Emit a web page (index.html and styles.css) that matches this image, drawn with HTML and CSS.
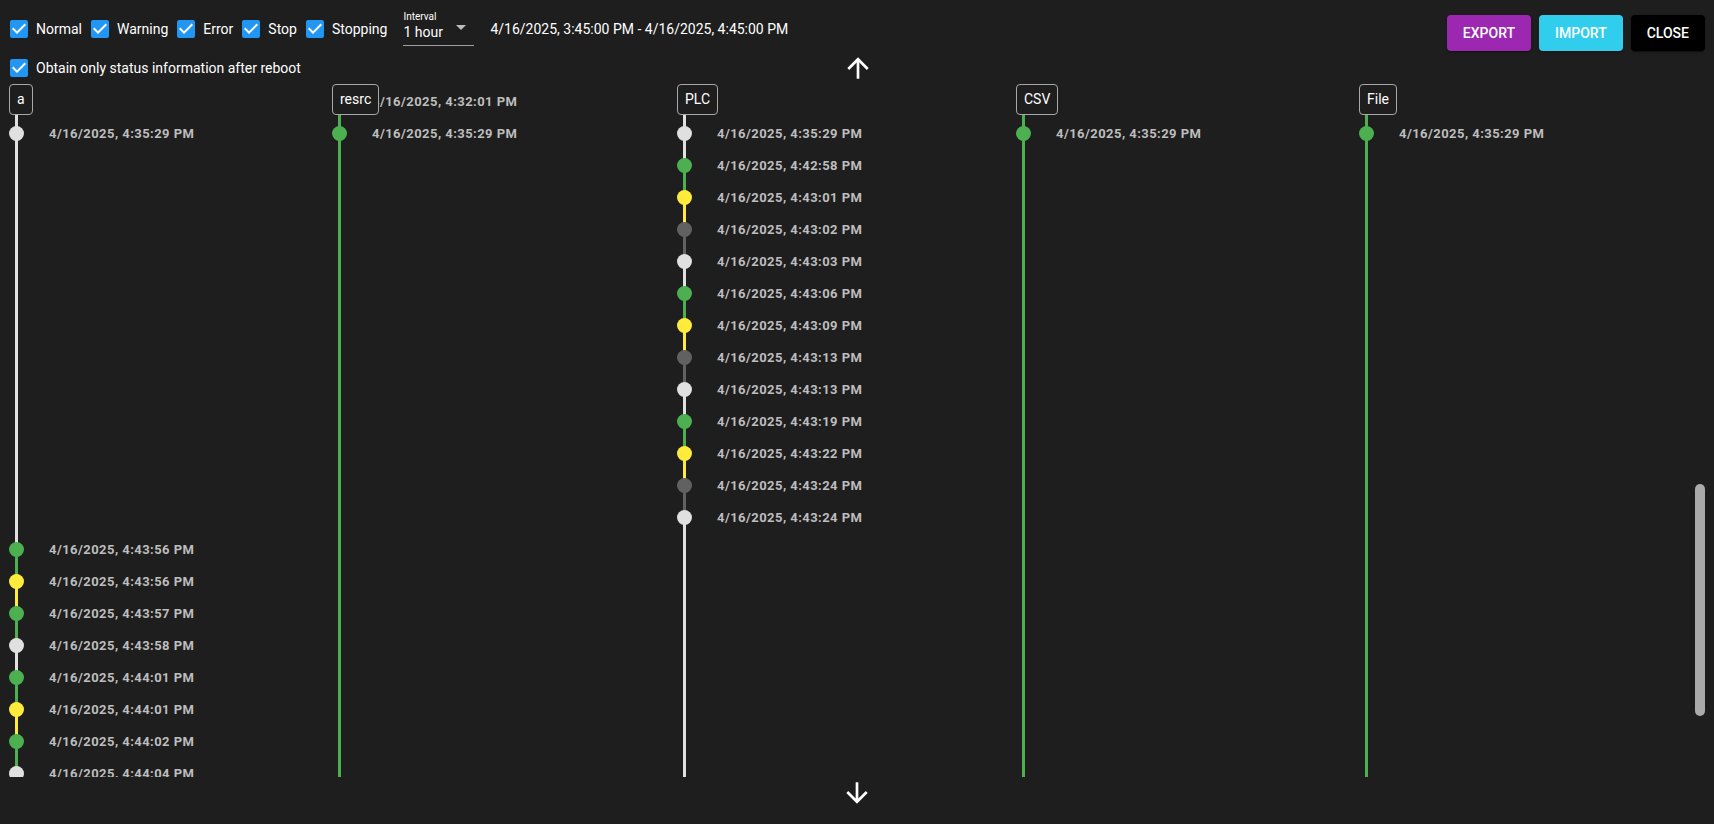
FILE: index.html
```html
<!DOCTYPE html>
<html lang="en">
<head>
<meta charset="utf-8">
<title>Status timeline</title>
<link rel="stylesheet" href="styles.css">
</head>
<body>
<div class="app">
  <header class="header">
    <div class="row1">
      <div class="filters">
        <label class="cb"><svg class="box" viewBox="3 3 18 18"><rect x="3" y="3" width="18" height="18" rx="2" class="box-bg"/><path class="box-check" d="M10 17l-5-5 1.41-1.41L10 14.17l7.59-7.59L19 8l-9 9z"/></svg><span>Normal</span></label>
        <label class="cb"><svg class="box" viewBox="3 3 18 18"><rect x="3" y="3" width="18" height="18" rx="2" class="box-bg"/><path class="box-check" d="M10 17l-5-5 1.41-1.41L10 14.17l7.59-7.59L19 8l-9 9z"/></svg><span>Warning</span></label>
        <label class="cb"><svg class="box" viewBox="3 3 18 18"><rect x="3" y="3" width="18" height="18" rx="2" class="box-bg"/><path class="box-check" d="M10 17l-5-5 1.41-1.41L10 14.17l7.59-7.59L19 8l-9 9z"/></svg><span>Error</span></label>
        <label class="cb"><svg class="box" viewBox="3 3 18 18"><rect x="3" y="3" width="18" height="18" rx="2" class="box-bg"/><path class="box-check" d="M10 17l-5-5 1.41-1.41L10 14.17l7.59-7.59L19 8l-9 9z"/></svg><span>Stop</span></label>
        <label class="cb"><svg class="box" viewBox="3 3 18 18"><rect x="3" y="3" width="18" height="18" rx="2" class="box-bg"/><path class="box-check" d="M10 17l-5-5 1.41-1.41L10 14.17l7.59-7.59L19 8l-9 9z"/></svg><span>Stopping</span></label>
        <div class="interval">
          <div class="interval-label">Interval</div>
          <div class="interval-value"><span>1 hour</span><span class="caret"></span></div>
        </div>
        <div class="range">4/16/2025, 3:45:00 PM - 4/16/2025, 4:45:00 PM</div>
      </div>
      <div class="actions">
        <button class="btn export">Export</button>
        <button class="btn import">Import</button>
        <button class="btn close">Close</button>
      </div>
    </div>
    <div class="row2">
      <label class="cb"><svg class="box" viewBox="3 3 18 18"><rect x="3" y="3" width="18" height="18" rx="2" class="box-bg"/><path class="box-check" d="M10 17l-5-5 1.41-1.41L10 14.17l7.59-7.59L19 8l-9 9z"/></svg><span>Obtain only status information after reboot</span></label>
      <svg class="arrow" viewBox="0 0 24 24"><path d="M4 12l1.41 1.41L11 7.83V20h2V7.83l5.58 5.59L20 12l-8-8-8 8z"/></svg>
      <span class="spacer"></span>
    </div>
  </header>

  <main class="timeline">
    <!-- column a -->
    <section class="col">
      <div class="tag">a</div>
      <div class="row tw bw"><div class="node"><i class="rail"></i></div></div>
      <div class="row tw bw"><div class="node"><i class="rail"></i><i class="dot w"></i></div><span class="time">4/16/2025, 4:35:29 PM</span></div>
      <div class="row tw bw"><div class="node"><i class="rail"></i></div></div>
      <div class="row tw bw"><div class="node"><i class="rail"></i></div></div>
      <div class="row tw bw"><div class="node"><i class="rail"></i></div></div>
      <div class="row tw bw"><div class="node"><i class="rail"></i></div></div>
      <div class="row tw bw"><div class="node"><i class="rail"></i></div></div>
      <div class="row tw bw"><div class="node"><i class="rail"></i></div></div>
      <div class="row tw bw"><div class="node"><i class="rail"></i></div></div>
      <div class="row tw bw"><div class="node"><i class="rail"></i></div></div>
      <div class="row tw bw"><div class="node"><i class="rail"></i></div></div>
      <div class="row tw bw"><div class="node"><i class="rail"></i></div></div>
      <div class="row tw bw"><div class="node"><i class="rail"></i></div></div>
      <div class="row tw bw"><div class="node"><i class="rail"></i></div></div>
      <div class="row tw bg"><div class="node"><i class="rail"></i><i class="dot g"></i></div><span class="time">4/16/2025, 4:43:56 PM</span></div>
      <div class="row tg by"><div class="node"><i class="rail"></i><i class="dot y"></i></div><span class="time">4/16/2025, 4:43:56 PM</span></div>
      <div class="row ty bg"><div class="node"><i class="rail"></i><i class="dot g"></i></div><span class="time">4/16/2025, 4:43:57 PM</span></div>
      <div class="row tg bw"><div class="node"><i class="rail"></i><i class="dot w"></i></div><span class="time">4/16/2025, 4:43:58 PM</span></div>
      <div class="row tw bg"><div class="node"><i class="rail"></i><i class="dot g"></i></div><span class="time">4/16/2025, 4:44:01 PM</span></div>
      <div class="row tg by"><div class="node"><i class="rail"></i><i class="dot y"></i></div><span class="time">4/16/2025, 4:44:01 PM</span></div>
      <div class="row ty bg"><div class="node"><i class="rail"></i><i class="dot g"></i></div><span class="time">4/16/2025, 4:44:02 PM</span></div>
      <div class="row tg bw"><div class="node"><i class="rail"></i><i class="dot w"></i></div><span class="time">4/16/2025, 4:44:04 PM</span></div>
      <div class="fill tw bw"><i class="rail"></i></div>
    </section>

    <!-- column resrc -->
    <section class="col">
      <div class="tag">resrc</div>
      <div class="row tg bg"><div class="node"><i class="rail"></i><i class="dot g"></i></div><span class="time">4/16/2025, 4:32:01 PM</span></div>
      <div class="row tg bg"><div class="node"><i class="rail"></i><i class="dot g"></i></div><span class="time">4/16/2025, 4:35:29 PM</span></div>
      <div class="fill tg bg"><i class="rail"></i></div>
    </section>

    <!-- column PLC -->
    <section class="col">
      <div class="tag">PLC</div>
      <div class="row tw bw"><div class="node"><i class="rail"></i></div></div>
      <div class="row tw bw"><div class="node"><i class="rail"></i><i class="dot w"></i></div><span class="time">4/16/2025, 4:35:29 PM</span></div>
      <div class="row tw bg"><div class="node"><i class="rail"></i><i class="dot g"></i></div><span class="time">4/16/2025, 4:42:58 PM</span></div>
      <div class="row tg by"><div class="node"><i class="rail"></i><i class="dot y"></i></div><span class="time">4/16/2025, 4:43:01 PM</span></div>
      <div class="row ty bs"><div class="node"><i class="rail"></i><i class="dot s"></i></div><span class="time">4/16/2025, 4:43:02 PM</span></div>
      <div class="row ts bw"><div class="node"><i class="rail"></i><i class="dot w"></i></div><span class="time">4/16/2025, 4:43:03 PM</span></div>
      <div class="row tw bg"><div class="node"><i class="rail"></i><i class="dot g"></i></div><span class="time">4/16/2025, 4:43:06 PM</span></div>
      <div class="row tg by"><div class="node"><i class="rail"></i><i class="dot y"></i></div><span class="time">4/16/2025, 4:43:09 PM</span></div>
      <div class="row ty bs"><div class="node"><i class="rail"></i><i class="dot s"></i></div><span class="time">4/16/2025, 4:43:13 PM</span></div>
      <div class="row ts bw"><div class="node"><i class="rail"></i><i class="dot w"></i></div><span class="time">4/16/2025, 4:43:13 PM</span></div>
      <div class="row tw bg"><div class="node"><i class="rail"></i><i class="dot g"></i></div><span class="time">4/16/2025, 4:43:19 PM</span></div>
      <div class="row tg by"><div class="node"><i class="rail"></i><i class="dot y"></i></div><span class="time">4/16/2025, 4:43:22 PM</span></div>
      <div class="row ty bs"><div class="node"><i class="rail"></i><i class="dot s"></i></div><span class="time">4/16/2025, 4:43:24 PM</span></div>
      <div class="row ts bw"><div class="node"><i class="rail"></i><i class="dot w"></i></div><span class="time">4/16/2025, 4:43:24 PM</span></div>
      <div class="fill tw bw"><i class="rail"></i></div>
    </section>

    <!-- column CSV -->
    <section class="col">
      <div class="tag">CSV</div>
      <div class="row tg bg"><div class="node"><i class="rail"></i></div></div>
      <div class="row tg bg"><div class="node"><i class="rail"></i><i class="dot g"></i></div><span class="time">4/16/2025, 4:35:29 PM</span></div>
      <div class="fill tg bg"><i class="rail"></i></div>
    </section>

    <!-- column File -->
    <section class="col">
      <div class="tag">File</div>
      <div class="row tg bg"><div class="node"><i class="rail"></i></div></div>
      <div class="row tg bg"><div class="node"><i class="rail"></i><i class="dot g"></i></div><span class="time">4/16/2025, 4:35:29 PM</span></div>
      <div class="fill tg bg"><i class="rail"></i></div>
    </section>

    <div class="thumb"></div>
  </main>

  <footer class="bottom">
    <svg class="arrow" viewBox="0 0 24 24"><path d="M20 12l-1.41-1.41L13 16.17V4h-2v12.17l-5.58-5.59L4 12l8 8 8-8z"/></svg>
  </footer>
</div>
</body>
</html>
```

FILE: styles.css
```css
* { box-sizing: border-box; }

html, body {
  margin: 0;
  padding: 0;
  background: #1e1e1e;
  color: #fff;
  font-family: Roboto, "Liberation Sans", Arial, sans-serif;
}

.app {
  width: 1714px;
  height: 824px;
  overflow: hidden;
  display: flex;
  flex-direction: column;
}

/* ---------- header ---------- */
.header {
  padding: 11px 9px 0 10px;
  flex: none;
}

.row1 {
  display: flex;
  align-items: flex-start;
  height: 40px;
}

.filters {
  display: flex;
  align-items: center;
  height: 35px;
  gap: 9px;
}

.cb {
  display: flex;
  align-items: center;
  gap: 8px;
  font-size: 14px;
  color: #fff;
  white-space: nowrap;
}

.box {
  width: 18px;
  height: 18px;
  display: block;
  flex: none;
}

.box-bg { fill: #2196f3; }
.box-check { fill: #fff; }

.interval {
  margin-left: 7px;
  width: 71px;
  border-bottom: 1px solid #9e9e9e;
  padding-bottom: 4px;
  align-self: flex-start;
}

.interval-label {
  font-size: 10px;
  line-height: 12px;
  color: #fff;
}

.interval-value {
  display: flex;
  justify-content: space-between;
  font-size: 14px;
  line-height: 18px;
  color: #fff;
}

.caret {
  width: 0;
  height: 0;
  border-left: 5px solid transparent;
  border-right: 5px solid transparent;
  border-top: 5px solid #bdbdbd;
  margin-top: 2px;
  margin-right: 8px;
}

.range {
  margin-left: 7px;
  font-size: 14px;
  color: #fff;
  white-space: nowrap;
}

.actions {
  margin-left: auto;
  margin-top: 4px;
  display: flex;
  gap: 8px;
}

.btn {
  height: 36px;
  padding: 0 16px;
  border: 0;
  border-radius: 4px;
  color: #fff;
  font-family: Roboto, "Liberation Sans", Arial, sans-serif;
  font-size: 14px;
  font-weight: 500;
  letter-spacing: 0;
  text-transform: uppercase;
  box-shadow: 0 2px 1px -1px rgba(0,0,0,.2), 0 1px 1px 0 rgba(0,0,0,.14), 0 1px 3px 0 rgba(0,0,0,.12);
}

.export { background: #9c27b0; }
.import { background: #31cded; }
.close { background: #000; }

.row2 {
  display: grid;
  grid-template-columns: 1fr auto 1fr;
  align-items: center;
  height: 33px;
}

.arrow {
  width: 32px;
  height: 32px;
  display: block;
  fill: #fff;
}

/* ---------- timeline ---------- */
.timeline {
  position: relative;
  margin: 0 9px;
  height: 693px;
  flex: none;
  overflow: hidden;
  display: grid;
  grid-template-columns: 323px 345px 339px 343px 1fr;
}

.col {
  position: relative;
  display: flex;
  flex-direction: column;
  padding-top: 1px;
  min-width: 0;
}

.tag {
  position: absolute;
  top: 0;
  left: 0;
  z-index: 2;
  height: 31px;
  padding: 0 7px;
  border: 1px solid #a8a8a8;
  border-radius: 4px;
  background: #1e1e1e;
  color: #fff;
  font-size: 14px;
  line-height: 29px;
  white-space: nowrap;
}

.row {
  display: flex;
  align-items: center;
  gap: 25px;
  height: 32px;
  flex: none;
}

.node {
  display: grid;
  width: 15px;
  height: 32px;
  flex: none;
}

.rail {
  grid-area: 1 / 1;
  justify-self: center;
  width: 3px;
  height: 100%;
  background: linear-gradient(var(--t) 50%, var(--b) 50%);
}

.dot {
  grid-area: 1 / 1;
  align-self: center;
  justify-self: center;
  width: 15px;
  height: 15px;
  border-radius: 50%;
}

.fill {
  flex: 1;
  display: flex;
  justify-content: center;
  width: 15px;
}

.fill .rail { height: auto; }

.tw { --t: #e0e0e0; }
.tg { --t: #4caf50; }
.ty { --t: #ffeb3b; }
.ts { --t: #616161; }
.bw { --b: #e0e0e0; }
.bg { --b: #4caf50; }
.by { --b: #ffeb3b; }
.bs { --b: #616161; }

.dot.w { background: #e0e0e0; }
.dot.g { background: #4caf50; }
.dot.y { background: #ffeb3b; }
.dot.s { background: #616161; }

.time {
  font-size: 13px;
  font-weight: 700;
  letter-spacing: 0.45px;
  color: #bdbdbd;
  white-space: nowrap;
}

.thumb {
  position: absolute;
  right: 0;
  top: 400px;
  width: 10px;
  height: 232px;
  border-radius: 5px;
  background: #ababab;
}

/* ---------- bottom ---------- */
.bottom {
  flex: 1;
  display: flex;
  justify-content: center;
  align-items: flex-start;
}
```
